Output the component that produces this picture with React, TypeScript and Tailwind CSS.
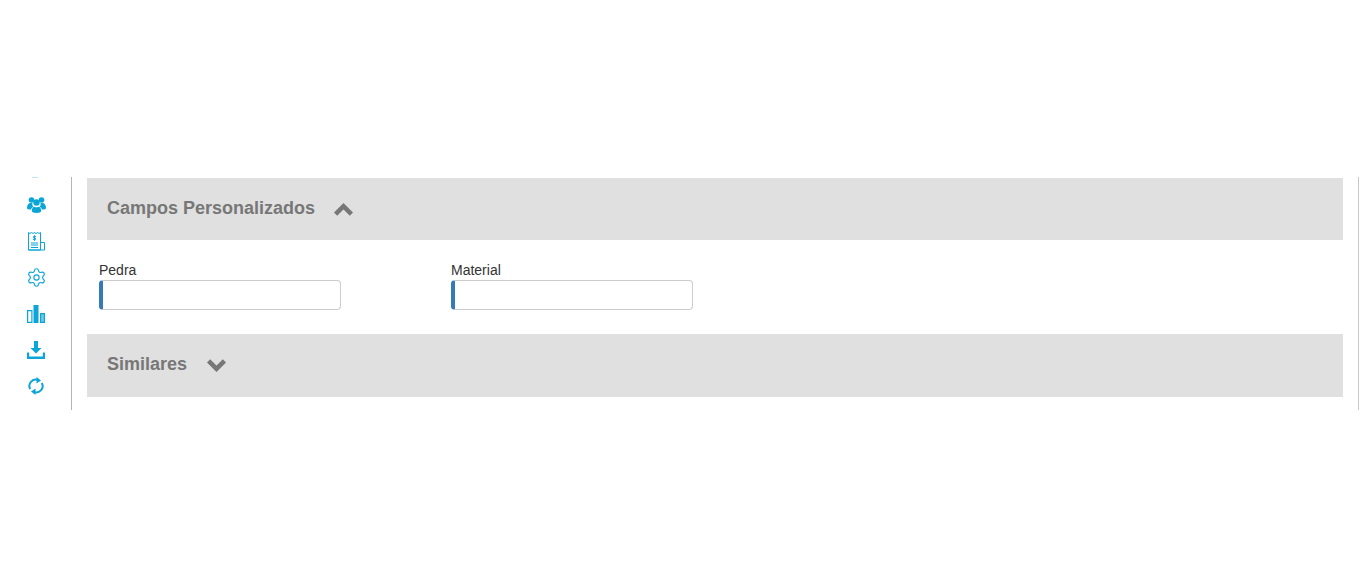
import { Settings } from "lucide-react";

const sans = "font-['Liberation_Sans',Arial,sans-serif]";

function UsersIcon() {
  return (
    <svg width="19" height="16" viewBox="0 0 19 16" fill="currentColor">
      <circle cx="4.500" cy="3" r="2.800" />
      <circle cx="14.500" cy="3" r="2.800" />
      <circle cx="9.500" cy="5.500" r="3.200" />
      <path d="M0 11c0-3 1.500-5 3.500-5h2c-.5 1.500 0 3 1 3.800C5 10.500 4.200 11.500 4 12.500 1.500 12.500 0 12 0 11z" />
      <path d="M19 11c0-3-1.500-5-3.500-5h-2c.5 1.500 0 3-1 3.800 1.500.7 2.300 1.700 2.500 2.700 2.500 0 4-.5 4-1.500z" />
      <path d="M4.800 14c0-3 1.500-4.300 2.700-4.300 1 .8 3 .8 4 0 1.200 0 2.700 1.300 2.700 4.300 0 1.300-2 2-4.700 2s-4.700-.7-4.700-2z" />
    </svg>
  );
}

function ReceiptIcon() {
  return (
    <svg width="17" height="19" viewBox="0 0 17 19" fill="none" stroke="currentColor" strokeWidth="1">
      <path d="M.5 18V.5l1.500 1 1.500-1 1.500 1 1.500-1 1.500 1 1.500-1 1.500 1 1.500-1V18z" />
      <path d="M12 10.500h4.500v7.500H.5" />
      <path d="M3 11h7M3 13h7M3 15.500h7" />
      <path d="M6.500 3v6M8 4.500H5.500V6h2v1.500H5" strokeWidth="0.9" />
    </svg>
  );
}

function BarsIcon() {
  return (
    <svg width="18" height="18" viewBox="0 0 18 18" fill="currentColor">
      <path d="M.6 5.600h4.300v11.800H.6z" fill="none" stroke="currentColor" strokeWidth="1.200" />
      <path d="M6.500 0H11.500v18H6.500z" />
      <path d="M13 8h5v10h-5z" opacity="0.6" />
      <path d="M13 8h5v1.200h-5zM13 16.800h5V18h-5zM13 8h1.200v10H13zM16.800 8H18v10h-1.200z" />
    </svg>
  );
}

function DownloadIcon() {
  return (
    <svg width="18" height="18" viewBox="0 0 18 18" fill="currentColor">
      <path d="M7 0h4v7h3.500L9 12.500 3.500 7H7z" />
      <path d="M0 11.500h2.200v4h13.600v-4H18V18H0z" />
    </svg>
  );
}

function SyncIcon() {
  return (
    <svg width="16" height="18" viewBox="0 0 16 18" fill="none" stroke="currentColor" strokeWidth="2">
      <path d="M2.200 12A6.300 6.300 0 0 1 10.500 3.300" />
      <path d="M13.800 6A6.300 6.300 0 0 1 5.500 14.700" />
      <path d="M8.500 0l4.500 3.500-4.500 3z" fill="currentColor" stroke="none" />
      <path d="M7.500 11.500L3 14.500l4.500 3.500z" fill="currentColor" stroke="none" />
    </svg>
  );
}

function ChevronUp() {
  return (
    <svg width="19" height="13" viewBox="0 0 19 13" fill="currentColor">
      <path d="M9.500 0L19 9.500 15.800 12.700 9.500 6.400 3.200 12.700 0 9.500z" />
    </svg>
  );
}

function ChevronDown() {
  return (
    <svg width="19" height="13" viewBox="0 0 19 13" fill="currentColor">
      <path d="M9.500 13L19 3.500 15.800.3 9.500 6.600 3.200.3 0 3.500z" />
    </svg>
  );
}

function Field({ label }: { label: string }) {
  return (
    <div className="w-[242px]">
      <label className="block text-[14px] leading-[20px] text-[#333]">{label}</label>
      <input
        type="text"
        className="block h-[30px] w-full rounded-[4px] border border-[#ccc] border-l-[4px] border-l-[#337ab7] bg-white"
      />
    </div>
  );
}

export default function App() {
  return (
    <div className={`h-[588px] bg-white pt-[177px] ${sans}`}>
      <div className="flex h-[233px]">
        <aside className="relative flex w-[72px] shrink-0 flex-col items-center border-r border-[#b5b5b5] pl-[1px] pt-[20px] text-[#0ba5d8]">
          <div className="absolute left-[32px] top-0 h-[1px] w-[6px] bg-[#bfe6f4]" />
          <div className="flex h-[16px] items-center"><UsersIcon /></div>
          <div className="mt-[19px] flex h-[19px] items-center"><ReceiptIcon /></div>
          <div className="mt-[17px] flex h-[19px] items-center"><Settings size={21} strokeWidth={1.3} /></div>
          <div className="mt-[18px] flex h-[18px] items-center"><BarsIcon /></div>
          <div className="mt-[18px] flex h-[18px] items-center"><DownloadIcon /></div>
          <div className="mt-[18px] flex h-[18px] items-center"><SyncIcon /></div>
        </aside>
        <main className="min-w-0 flex-1 pl-[15px] pr-[15px] pt-[1px]">
          <div className="flex h-[62px] items-center gap-[19px] bg-[#e0e0e0] pl-5 text-[#777]">
            <span className="pb-[2px] text-[18px] font-bold leading-none">Campos Personalizados</span>
            <ChevronUp />
          </div>
          <div className="flex h-[94px] gap-[110px] pl-3 pt-5">
            <Field label="Pedra" />
            <Field label="Material" />
          </div>
          <div className="flex h-[63px] items-center gap-[20px] bg-[#e0e0e0] pl-5 text-[#777]">
            <span className="pb-[3px] text-[18px] font-bold leading-none">Similares</span>
            <ChevronDown />
          </div>
        </main>
        <div className="mr-[1px] w-[1px] shrink-0 bg-[#c8c8c8]" />
      </div>
    </div>
  );
}
